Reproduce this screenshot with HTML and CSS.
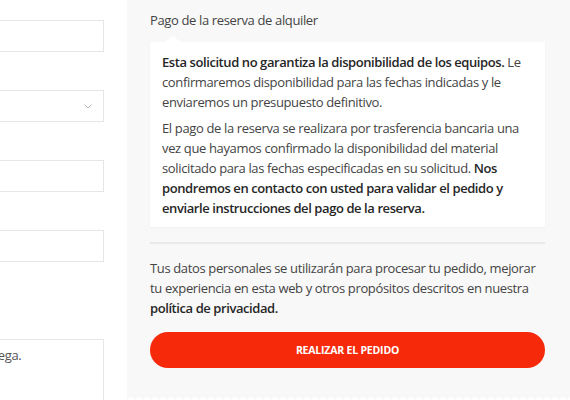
FILE: index.html
```html
<!DOCTYPE html>
<html lang="es">
<head>
<meta charset="utf-8">
<title>Checkout</title>
<link rel="stylesheet" href="styles.css">
</head>
<body>
<div class="page">
  <div class="form-col">
    <div class="form">
      <div class="field">
        <label class="label">Apellidos</label>
        <div class="input"></div>
      </div>
      <div class="field">
        <label class="label">País / Región</label>
        <div class="input select">
          <svg class="chevron" width="8" height="5" viewBox="0 0 8 5"><path d="M0.5 0.5 L4 4 L7.5 0.5" fill="none" stroke="#b5b5b5" stroke-width="1"/></svg>
        </div>
      </div>
      <div class="field">
        <label class="label">Dirección de la calle</label>
        <div class="input"></div>
      </div>
      <div class="field">
        <label class="label">Teléfono</label>
        <div class="input"></div>
      </div>
      <h3 class="section-title">Información adicional</h3>
      <label class="label">Notas del pedido</label>
      <div class="textarea">Notas sobre tu pedido, por ejemplo, notas especiales para la entrega.</div>
    </div>
  </div>
  <div class="summary">
    <div class="summary-inner">
      <p class="method">Pago de la reserva de alquiler</p>
      <div class="notice">
        <p><strong>Esta solicitud no garantiza la disponibilidad de los equipos.</strong> Le confirmaremos disponibilidad para las fechas indicadas y le enviaremos un presupuesto definitivo.</p>
        <p>El pago de la reserva se realizara por trasferencia bancaria una vez que hayamos confirmado la disponibilidad del material solicitado para las fechas especificadas en su solicitud. <strong>Nos pondremos en contacto con usted para validar el pedido y enviarle instrucciones del pago de la reserva.</strong></p>
      </div>
      <div class="divider"></div>
      <p class="privacy">Tus datos personales se utilizarán para procesar tu pedido, mejorar tu experiencia en esta web y otros propósitos descritos en nuestra <strong>política de privacidad.</strong></p>
      <button class="order-btn">REALIZAR EL PEDIDO</button>
    </div>
    <div class="scallop"></div>
  </div>
</div>
</body>
</html>
```

FILE: styles.css
```css
html, body {
  margin: 0;
  padding: 0;
  background: #ffffff;
}

body {
  font-family: "Open Sans", "Noto Sans", sans-serif;
  font-size: 13px;
  line-height: 20px;
  letter-spacing: -0.36px;
  color: #444444;
  overflow: hidden;
}

.page {
  display: flex;
  width: 570px;
  height: 400px;
  overflow: hidden;
}

.form-col {
  width: 127px;
  flex: 0 0 127px;
  overflow: hidden;
}

.form {
  width: 514px;
  margin-left: -387px;
  margin-top: -6px;
  padding-right: 23px;
  box-sizing: border-box;
}

.field {
  margin-bottom: 12px;
}

.label {
  display: block;
  line-height: 20px;
  margin-bottom: 6px;
  color: #444;
}

.input {
  height: 32px;
  box-sizing: border-box;
  border: 1px solid #e6e6e6;
  background: #fff;
}

.select {
  display: flex;
  align-items: center;
  justify-content: flex-end;
  padding-right: 11px;
}

.chevron {
  display: block;
}

.section-title {
  margin: 0 0 19px;
  font-size: 13px;
  line-height: 20px;
  font-weight: 600;
}

.textarea {
  height: 100px;
  box-sizing: border-box;
  border: 1px solid #e6e6e6;
  padding: 5px 12px;
  white-space: nowrap;
  color: #555;
}

.summary {
  flex: 1;
  background: #f8f8f8;
  display: flex;
  flex-direction: column;
}

.summary-inner {
  padding: 10px 25px 0 23px;
}

.method {
  margin: 0 0 12px;
  color: #444;
}

.notice {
  position: relative;
  background: #ffffff;
  padding: 10px 12px 9px;
  box-shadow: 0 1px 2px rgba(0, 0, 0, 0.04);
}

.notice::before {
  content: "";
  position: absolute;
  top: -6px;
  left: 15px;
  border-left: 8px solid transparent;
  border-right: 8px solid transparent;
  border-bottom: 6px solid #ffffff;
}

.notice p {
  margin: 0;
}

.notice p + p {
  margin-top: 6px;
}

.notice strong,
.privacy strong {
  font-weight: 600;
  letter-spacing: -0.42px;
  color: #262626;
}

.divider {
  height: 2px;
  background: #e9e9e9;
  margin: 15px 0 14px;
}

.privacy {
  margin: 0 0 14px;
}

.order-btn {
  display: block;
  width: 100%;
  height: 36px;
  border: none;
  border-radius: 18px;
  background: #f6290a;
  color: #ffffff;
  font-family: "Open Sans", "Noto Sans", sans-serif;
  font-size: 10.5px;
  font-weight: 700;
  letter-spacing: -0.2px;
  padding: 0;
}

.scallop {
  margin-top: 25px;
  height: 8px;
  background-image: radial-gradient(circle at 4px 8px, #ffffff 3.6px, rgba(255,255,255,0) 4.2px);
  background-size: 8px 8px;
  background-repeat: repeat-x;
}
```
